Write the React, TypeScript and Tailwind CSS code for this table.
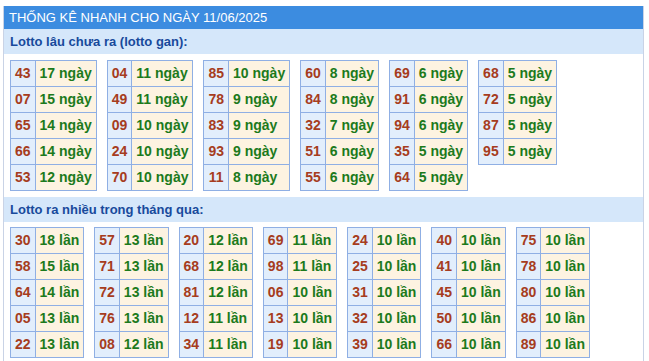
import React from "react";

const gan: [string, string][][] = [
  [["43", "17"], ["07", "15"], ["65", "14"], ["66", "14"], ["53", "12"]],
  [["04", "11"], ["49", "11"], ["09", "10"], ["24", "10"], ["70", "10"]],
  [["85", "10"], ["78", "9"], ["83", "9"], ["93", "9"], ["11", "8"]],
  [["60", "8"], ["84", "8"], ["32", "7"], ["51", "6"], ["55", "6"]],
  [["69", "6"], ["91", "6"], ["94", "6"], ["35", "5"], ["64", "5"]],
  [["68", "5"], ["72", "5"], ["87", "5"], ["95", "5"]],
];

const nhieu: [string, string][][] = [
  [["30", "18"], ["58", "15"], ["64", "14"], ["05", "13"], ["22", "13"]],
  [["57", "13"], ["71", "13"], ["72", "13"], ["76", "13"], ["08", "12"]],
  [["20", "12"], ["68", "12"], ["81", "12"], ["12", "11"], ["34", "11"]],
  [["69", "11"], ["98", "11"], ["06", "10"], ["13", "10"], ["19", "10"]],
  [["24", "10"], ["25", "10"], ["31", "10"], ["32", "10"], ["39", "10"]],
  [["40", "10"], ["41", "10"], ["45", "10"], ["50", "10"], ["66", "10"]],
  [["75", "10"], ["78", "10"], ["80", "10"], ["86", "10"], ["89", "10"]],
];

const StatTable = ({ rows, unit }: { rows: [string, string][]; unit: string }) => (
  <table className="border-collapse self-start">
    <tbody>
      {rows.map(([num, count]) => (
        <tr key={num} className="h-[26px]">
          <td className="border border-[#8fafe4] bg-[#e2eefc] px-[4px] text-center text-[#a63c20]">{num}</td>
          <td className="border border-[#8fafe4] bg-[#fdf3e1] px-[4px] text-[#1c7a1c]">
            {count} {unit}
          </td>
        </tr>
      ))}
    </tbody>
  </table>
);

const SectionTitle = ({ children }: { children: React.ReactNode }) => (
  <div className="h-[25px] bg-[#d5e7fa] pl-[6px] text-[13px] font-bold leading-[25px] text-[#184a9c]">
    {children}
  </div>
);

export default function App() {
  return (
    <div className="h-[361px] w-[649px] overflow-hidden bg-white font-['Liberation_Sans',Arial,sans-serif]">
      <div className="ml-[3px] mt-[6px] w-[641px] border-x border-[#c9d3e6] pb-2">
        <div className="h-[23px] bg-[#3c8ce0] pl-[5px] text-[13px] leading-[23px] text-white">
          THỐNG KÊ NHANH CHO NGÀY 11/06/2025
        </div>
        <SectionTitle>Lotto lâu chưa ra (lotto gan):</SectionTitle>
        <div className="flex gap-[10px] px-[6px] pt-[6px] pb-[6px] text-[14px] font-bold">
          {gan.map((t, i) => (
            <StatTable key={i} rows={t} unit="ngày" />
          ))}
        </div>
        <SectionTitle>Lotto ra nhiều trong tháng qua:</SectionTitle>
        <div className="flex gap-[10px] px-[6px] pt-[5px] text-[14px] font-bold">
          {nhieu.map((t, i) => (
            <StatTable key={i} rows={t} unit="lần" />
          ))}
        </div>
      </div>
    </div>
  );
}
